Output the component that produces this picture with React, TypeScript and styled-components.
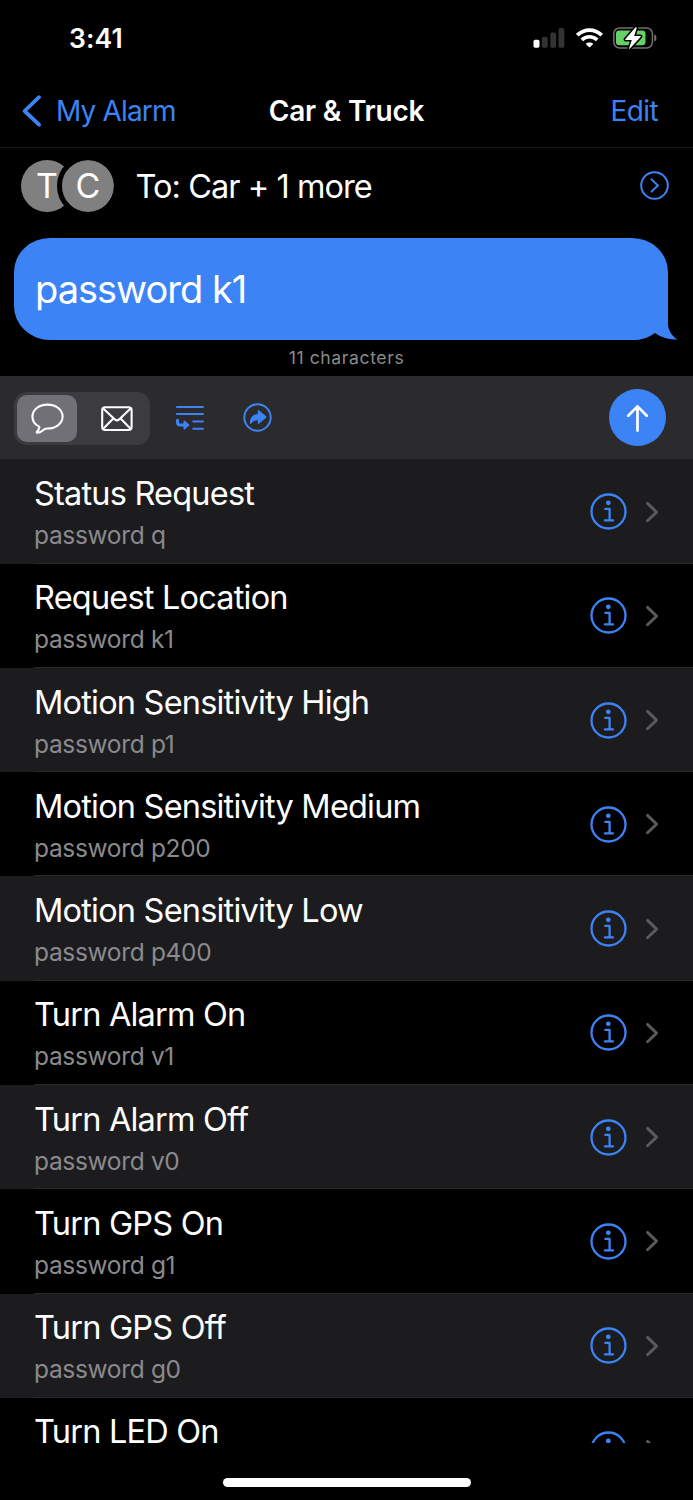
import React from "react";
import styled, { createGlobalStyle } from "styled-components";

const BLUE = "#3c83f6";

const GlobalStyle = createGlobalStyle`
  *, *::before, *::after { box-sizing: border-box; }
  body { margin: 0; background: #000; }
`;

const Screen = styled.main`
  width: 693px;
  height: 1500px;
  display: flex;
  flex-direction: column;
  overflow: hidden;
  background: #000;
  color: #fff;
  font-family: Inter, "Liberation Sans", sans-serif;
  white-space: nowrap;

  svg { display: block; flex: none; }
`;

const Label = styled.span<{ $size: number; $spacing?: number; $weight?: number; $color?: string }>`
  font-size: ${(p) => p.$size}px;
  line-height: 1.2;
  font-weight: ${(p) => p.$weight ?? 400};
  letter-spacing: ${(p) => p.$spacing ?? 0}px;
  color: ${(p) => p.$color ?? "inherit"};
`;

const StatusBar = styled.header`
  flex: none;
  height: 74px;
  padding: 3px 36px 0 69px;
  display: flex;
  align-items: center;
  justify-content: space-between;
`;

const StatusIcons = styled.div`
  display: flex;
  align-items: center;
  gap: 10.5px;
  padding-bottom: 2px;
`;

const NavBar = styled.nav`
  flex: none;
  height: 74px;
  padding: 2px 22px 0;
  display: grid;
  grid-template-columns: 1fr auto 1fr;
  align-items: center;
  border-bottom: 1px solid #19191a;
`;

const BackButton = styled.a`
  display: flex;
  align-items: center;
  gap: 14px;
  color: ${BLUE};

  svg { margin-top: -2px; }
`;

const EditButton = styled.a`
  justify-self: end;
  margin-right: 13px;
  color: ${BLUE};
`;

const RecipientRow = styled.section`
  flex: none;
  height: 76px;
  padding: 0 24.5px 0 21px;
  display: flex;
  align-items: center;

  > svg { margin-top: -1px; }
`;

const Avatars = styled.div`
  display: flex;
  margin-right: 21.5px;
`;

const Avatar = styled.div<{ $front?: boolean }>`
  width: ${(p) => (p.$front ? 62 : 52)}px;
  height: ${(p) => (p.$front ? 62 : 52)}px;
  margin: ${(p) => (p.$front ? "-5px -5px -5px -16px" : "0")};
  border: ${(p) => (p.$front ? "5px solid #000" : "none")};
  border-radius: 50%;
  display: flex;
  align-items: center;
  justify-content: center;
  background: #808080;
  background-clip: padding-box;
`;

const Recipient = styled.div`
  flex: 1;
`;

const Bubble = styled.section`
  position: relative;
  flex: none;
  width: 654px;
  height: 102px;
  margin: 14px 0 0 14px;
  padding: 2px 21px 0;
  display: flex;
  align-items: center;
  border-radius: 36px / 34px;
  background: ${BLUE};
`;

const Tail = styled.svg`
  position: absolute;
  right: -10px;
  bottom: 0;
`;

const CharacterCount = styled.div`
  flex: none;
  height: 36px;
  display: flex;
  align-items: center;
  justify-content: center;
`;

const Toolbar = styled.section`
  flex: none;
  height: 83px;
  padding: 0 27px 0 14px;
  display: flex;
  align-items: center;
  background: #2b2b2d;
`;

const Segments = styled.div`
  width: 136px;
  height: 53px;
  padding: 3px;
  margin: 2px 25px 0 0;
  display: flex;
  border-radius: 13px;
  background: #3c3c40;
`;

const Segment = styled.div<{ $active?: boolean }>`
  flex: none;
  width: ${(p) => (p.$active ? 60 : 70)}px;
  margin-left: ${(p) => (p.$active ? 0 : 4.5)}px;
  display: flex;
  align-items: center;
  justify-content: center;
  border-radius: 10px;
  background: ${(p) => (p.$active ? "#717076" : "transparent")};
`;

const ToolbarActions = styled.div`
  flex: 1;
  display: flex;
  align-items: center;
  gap: 38.5px;
`;

const SendButton = styled.div`
  width: 57px;
  height: 57px;
  border-radius: 50%;
  display: flex;
  align-items: center;
  justify-content: center;
  background: ${BLUE};
`;

const List = styled.ul`
  flex: none;
  height: 984px;
  margin: 0;
  padding: 0.4px 0 0;
  overflow: hidden;
  list-style: none;
  background: #1c1c1e;
`;

const Row = styled.li<{ $shaded: boolean }>`
  height: 104.27px;
  padding-left: 34px;
  background: ${(p) => (p.$shaded ? "#1c1c1e" : "#000")};
`;

const RowBody = styled.div`
  height: 100%;
  padding-right: 34px;
  display: flex;
  align-items: center;
  border-bottom: 1px solid #29292b;
`;

const RowText = styled.div`
  flex: 1;
  align-self: flex-start;
  padding-top: 14.6px;
  display: flex;
  flex-direction: column;
  gap: 8px;
`;

const RowIcons = styled.div`
  display: flex;
  align-items: center;
  gap: 18px;
  padding-top: 1px;
`;

const HomeArea = styled.footer`
  flex: 1;
  display: flex;
  justify-content: center;
  padding-top: 35px;
`;

const HomeIndicator = styled.div`
  width: 248px;
  height: 9px;
  border-radius: 5px;
  background: #fff;
`;

const SignalIcon = () => (
  <svg width="32" height="20" viewBox="0 0 32 20">
    <rect x="0.5" y="11.7" width="6" height="8" rx="1.7" fill="#fff" />
    <rect x="8.9" y="8.7" width="5.8" height="11" rx="1.7" fill="#333" />
    <rect x="17.3" y="4.5" width="5.8" height="15.2" rx="1.7" fill="#333" />
    <rect x="25.5" y="0" width="5.8" height="19.7" rx="1.7" fill="#333" />
  </svg>
);

const WifiIcon = () => (
  <svg width="27" height="20" viewBox="0 0 27 20" fill="none" stroke="#fff">
    <path d="M1.3 7.2C8.2 .4 18.8 .4 25.7 7.2" strokeWidth="3.9" />
    <path d="M5.8 11.9C10.1 7.7 16.9 7.7 21.2 11.9" strokeWidth="3.6" />
    <path d="M13.5 19.5L9.7 15.9C11.8 14 15.2 14 17.3 15.9Z" fill="#fff" stroke="none" />
  </svg>
);

const BatteryIcon = () => (
  <svg width="44" height="22" viewBox="0 0 44 22">
    <rect x="0.8" y="0.9" width="38.6" height="20" rx="5.8" fill="none" stroke="#707072" strokeWidth="1.5" />
    <path d="M41.2 7.2c3 1.2 3 6.2 0 7.4z" fill="#707072" />
    <rect x="3" y="3.6" width="29.5" height="14.6" rx="3.3" fill="#65d166" />
    <path
      d="M22.6 .3L12.2 12.2Q11.8 13 12.8 13H18.8L16 21.6Q16.2 22 17 21.6L27.8 9.8Q28.2 9 27.2 9H21.2L23.8 .7Q23.4 0 22.6 .3Z"
      fill="#fff"
      stroke="#000"
      strokeWidth="3"
      paintOrder="stroke"
    />
  </svg>
);

const BackIcon = () => (
  <svg width="20" height="32" viewBox="0 0 20 32" fill="none" stroke={BLUE} strokeWidth="3.8" strokeLinecap="round" strokeLinejoin="round">
    <path d="M17 2.2L2.6 16L17 29.7" />
  </svg>
);

const DetailIcon = () => (
  <svg width="29" height="29" viewBox="0 0 29 29" fill="none" stroke={BLUE} strokeWidth="2" strokeLinecap="round" strokeLinejoin="round">
    <circle cx="14.5" cy="14.5" r="13.3" />
    <path d="M11.5 8.4L17.9 14.5L11.5 20.6" />
  </svg>
);

const SpeechIcon = () => (
  <svg width="33" height="31" viewBox="0 0 33 31" fill="none" stroke="#fff" strokeWidth="2.1" strokeLinejoin="round">
    <path d="M16.5 1.6C8 1.6 1.4 6.8 1.4 13.6C1.4 18.1 4.2 21.7 7.8 23.4C8.6 23.9 8.6 24.6 8.2 25.3C7.6 26.6 6.7 27.8 5.9 28.8C5.4 29.4 5.8 29.9 6.6 29.8C9.3 29.4 11.4 28 13.4 26.2C14.2 25.5 14.9 25.5 16.5 25.5C25 25.5 31.6 20.3 31.6 13.6C31.6 6.8 25 1.6 16.5 1.6Z" />
  </svg>
);

const MailIcon = () => (
  <svg width="32" height="25" viewBox="0 0 32 25" fill="none" stroke="#fff" strokeWidth="2.1" strokeLinejoin="round">
    <rect x="1.2" y="1.2" width="29.4" height="22.8" rx="3" />
    <path d="M2 2.3L13.9 13.4Q16 15.2 18.1 13.4L29.8 2.3M2 23L11.8 13M29.8 23L20.1 13" />
  </svg>
);

const InsertIcon = () => (
  <svg width="29" height="26" viewBox="0 0 29 26" fill="none" stroke={BLUE} strokeWidth="2" strokeLinecap="round">
    <path d="M1.9 1.9H28M1.9 9.1H28M18.2 16.6H28M18.2 23.8H28" />
    <path d="M2.5 15.2V17.6Q2.5 20 5 20H9" strokeWidth="3" />
    <path d="M9.2 16.2L13.8 20L9.2 23.9Z" fill={BLUE} strokeWidth="1.4" strokeLinejoin="round" />
  </svg>
);

const ForwardIcon = () => (
  <svg width="29" height="29" viewBox="0 0 29 29">
    <circle cx="14.5" cy="14.5" r="13.2" fill="none" stroke={BLUE} strokeWidth="2" />
    <path
      d="M15.9 7.2L22.9 13.1Q23.8 14 22.9 14.9L15.9 20.7Q14.8 21.3 14.8 20V17.3C11.4 17.2 9.6 18.4 8.1 20.5C7.5 21.2 6.8 21 6.8 20.1C7 14.5 10 11.2 14.8 11V7.9Q14.8 6.5 15.9 7.2Z"
      fill={BLUE}
    />
  </svg>
);

const SendIcon = () => (
  <svg width="23" height="28" viewBox="0 0 23 28" fill="none" stroke="#fff" strokeWidth="2.7" strokeLinecap="round" strokeLinejoin="round">
    <path d="M11.5 26.6V2.4M2.2 11.8L11.5 2.4L20.8 11.8" />
  </svg>
);

const InfoIcon = () => (
  <svg width="37" height="37" viewBox="0 0 37 37" fill="none" stroke={BLUE} strokeWidth="2.3" strokeLinecap="round" strokeLinejoin="round">
    <circle cx="18.5" cy="18.5" r="17" />
    <circle cx="18.3" cy="9.8" r="2.4" fill={BLUE} stroke="none" />
    <path d="M15.3 15.9H19.6V27.4M14.9 27.4H23" />
  </svg>
);

const ChevronIcon = () => (
  <svg width="14" height="22" viewBox="0 0 14 22" fill="none" stroke="#5a5a5e" strokeWidth="2.9" strokeLinecap="round" strokeLinejoin="round">
    <path d="M2.5 2.4L11.6 11.1L2.5 19.8" />
  </svg>
);

const commands: { title: string; message?: string }[] = [
  { title: "Status Request", message: "password q" },
  { title: "Request Location", message: "password k1" },
  { title: "Motion Sensitivity High", message: "password p1" },
  { title: "Motion Sensitivity Medium", message: "password p200" },
  { title: "Motion Sensitivity Low", message: "password p400" },
  { title: "Turn Alarm On", message: "password v1" },
  { title: "Turn Alarm Off", message: "password v0" },
  { title: "Turn GPS On", message: "password g1" },
  { title: "Turn GPS Off", message: "password g0" },
  { title: "Turn LED On" },
];

export default function App() {
  return (
    <>
      <GlobalStyle />
      <Screen>
        <StatusBar>
          <Label $size={26.5} $weight={600} $spacing={0.1}>3:41</Label>
          <StatusIcons>
            <SignalIcon />
            <WifiIcon />
            <BatteryIcon />
          </StatusIcons>
        </StatusBar>
        <NavBar>
          <BackButton>
            <BackIcon />
            <Label $size={28} $spacing={-0.85}>My Alarm</Label>
          </BackButton>
          <Label $size={28} $weight={600} $spacing={-0.22}>Car &amp; Truck</Label>
          <EditButton>
            <Label $size={28} $spacing={-0.6}>Edit</Label>
          </EditButton>
        </NavBar>
        <RecipientRow>
          <Avatars>
            <Avatar><Label $size={34}>T</Label></Avatar>
            <Avatar $front><Label $size={34}>C</Label></Avatar>
          </Avatars>
          <Recipient>
            <Label $size={32.5} $spacing={-0.95}>To: Car + 1 more</Label>
          </Recipient>
          <DetailIcon />
        </RecipientRow>
        <Bubble>
          <Label $size={38} $spacing={-1}>password k1</Label>
          <Tail width="53" height="35" viewBox="0 0 53 35" fill={BLUE}>
            <path d="M0 0H43V19C43 25 47 31 52.6 34.6C44 34.6 36 32.5 30 28C24 32.5 16 35 8 35H0Z" />
          </Tail>
        </Bubble>
        <CharacterCount>
          <Label $size={17.6} $spacing={0.6} $color="#8a8a8e">11 characters</Label>
        </CharacterCount>
        <Toolbar>
          <Segments>
            <Segment $active><SpeechIcon /></Segment>
            <Segment><MailIcon /></Segment>
          </Segments>
          <ToolbarActions>
            <InsertIcon />
            <ForwardIcon />
          </ToolbarActions>
          <SendButton><SendIcon /></SendButton>
        </Toolbar>
        <List>
          {commands.map((command, index) => (
            <Row key={command.title} $shaded={index % 2 === 0}>
              <RowBody>
                <RowText>
                  <Label $size={32.5} $spacing={-0.8}>{command.title}</Label>
                  {command.message && (
                    <Label $size={24.5} $spacing={-0.33} $color="#8a8a8e">{command.message}</Label>
                  )}
                </RowText>
                <RowIcons>
                  <InfoIcon />
                  <ChevronIcon />
                </RowIcons>
              </RowBody>
            </Row>
          ))}
        </List>
        <HomeArea>
          <HomeIndicator />
        </HomeArea>
      </Screen>
    </>
  );
}
